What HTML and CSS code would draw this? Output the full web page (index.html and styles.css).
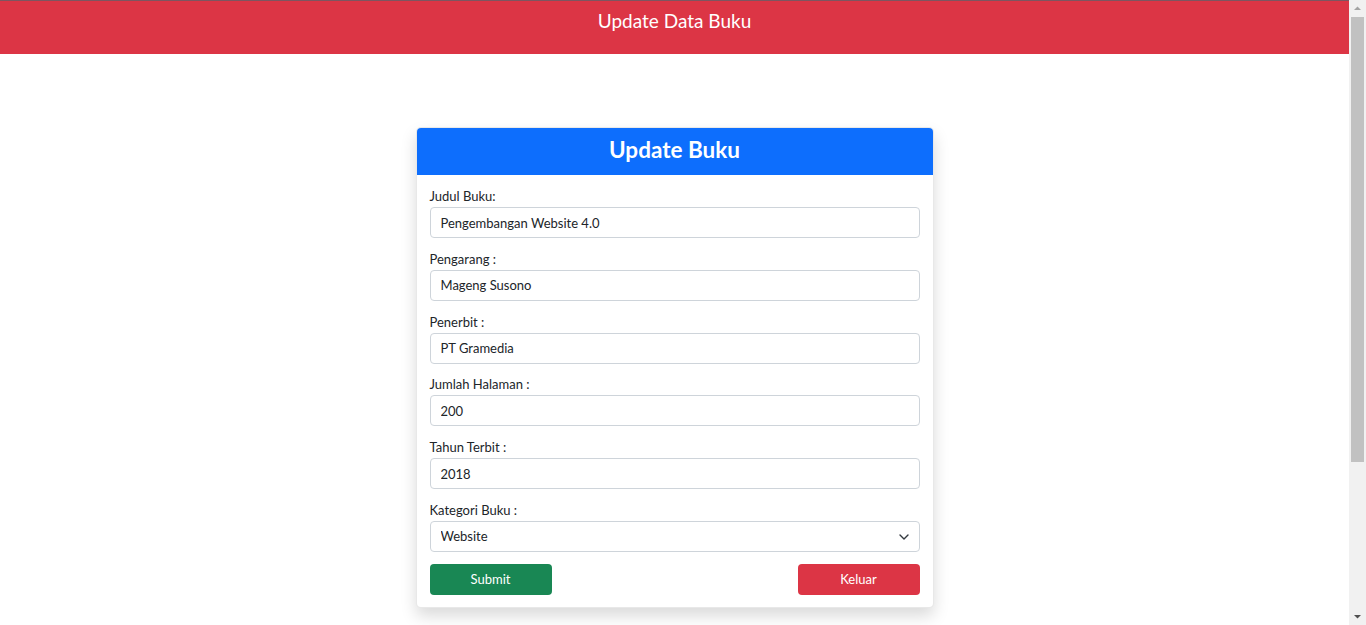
FILE: index.html
```html
<!DOCTYPE html>
<html lang="id">
<head>
<meta charset="utf-8">
<title>Update Data Buku</title>
<link rel="stylesheet" href="styles.css">
</head>
<body>
<div class="viewport">
  <header class="topbar">
    <h1 class="topbar-title">Update Data Buku</h1>
  </header>
  <main class="page">
    <section class="card">
      <div class="card-header">
        <h2 class="card-title">Update Buku</h2>
      </div>
      <form class="card-body">
        <div class="field">
          <label class="field-label" for="judul">Judul Buku:</label>
          <input class="field-input" id="judul" type="text" value="Pengembangan Website 4.0">
        </div>
        <div class="field">
          <label class="field-label" for="pengarang">Pengarang :</label>
          <input class="field-input" id="pengarang" type="text" value="Mageng Susono">
        </div>
        <div class="field">
          <label class="field-label" for="penerbit">Penerbit :</label>
          <input class="field-input" id="penerbit" type="text" value="PT Gramedia">
        </div>
        <div class="field">
          <label class="field-label" for="halaman">Jumlah Halaman :</label>
          <input class="field-input" id="halaman" type="text" value="200">
        </div>
        <div class="field">
          <label class="field-label" for="tahun">Tahun Terbit :</label>
          <input class="field-input" id="tahun" type="text" value="2018">
        </div>
        <div class="field">
          <label class="field-label" for="kategori">Kategori Buku :</label>
          <div class="select-wrap">
            <select class="field-input field-select" id="kategori">
              <option selected>Website</option>
            </select>
            <svg class="select-chevron" width="10" height="6" viewBox="0 0 10 6" aria-hidden="true"><path d="M1 1l4 4 4-4" fill="none" stroke="#343a40" stroke-width="1.4" stroke-linecap="round" stroke-linejoin="round"/></svg>
          </div>
        </div>
        <div class="actions">
          <button class="btn btn-green" type="button">Submit</button>
          <button class="btn btn-red" type="button">Keluar</button>
        </div>
      </form>
    </section>
  </main>
</div>
<div class="scrollbar" aria-hidden="true">
  <svg class="scroll-arrow" width="17" height="17" viewBox="0 0 17 17"><path d="M5 10h7L8.5 6.5z" fill="#a3a3a3"/></svg>
  <div class="scroll-track"><div class="scroll-thumb"></div></div>
  <svg class="scroll-arrow" width="17" height="17" viewBox="0 0 17 17"><path d="M5 7h7L8.5 10.5z" fill="#505050"/></svg>
</div>
</body>
</html>
```
FILE: styles.css
```css
html, body {
  margin: 0;
  padding: 0;
  height: 100%;
  overflow: hidden;
}
body {
  font-family: "Lato", "Open Sans", sans-serif;
  color: #212529;
  background: #ffffff;
  display: flex;
}
.viewport {
  flex: 1;
  min-width: 0;
}
.topbar {
  background: #dc3545;
  border-top: 1px solid #7d5560;
  height: 53px;
  display: flex;
  justify-content: center;
}
.topbar-title {
  margin: 0;
  padding-top: 7px;
  font-size: 19px;
  font-weight: 400;
  line-height: 26px;
  color: #ffffff;
}
.page {
  display: flex;
  justify-content: center;
  padding-top: 73px;
}
.card {
  width: 518px;
  box-sizing: border-box;
  border: 1px solid rgba(0, 0, 0, 0.09);
  border-radius: 5px;
  box-shadow: 0 8px 16px rgba(0, 0, 0, 0.15);
  background: #ffffff;
  overflow: hidden;
}
.card-header {
  background: #0d6efd;
  height: 47px;
  box-sizing: border-box;
  padding-bottom: 4px;
  display: flex;
  align-items: center;
  justify-content: center;
}
.card-title {
  margin: 0;
  font-size: 22.5px;
  font-weight: 700;
  color: #ffffff;
  line-height: 30px;
}
.card-body {
  padding: 11px 13px 12px;
  display: flex;
  flex-direction: column;
  gap: 10.8px;
}
.field {
  display: flex;
  flex-direction: column;
}
.field-label {
  font-size: 13px;
  line-height: 21px;
}
.field-input {
  box-sizing: border-box;
  width: 100%;
  height: 31px;
  padding: 0 10px;
  font-family: inherit;
  font-size: 13px;
  color: #212529;
  border: 1px solid #ced4da;
  border-radius: 4px;
  background: #ffffff;
  outline: none;
}
.select-wrap {
  position: relative;
}
.field-select {
  appearance: none;
  -webkit-appearance: none;
}
.select-chevron {
  position: absolute;
  right: 11px;
  top: 13px;
  pointer-events: none;
}
.actions {
  display: flex;
  justify-content: space-between;
  margin-top: 1.2px;
}
.btn {
  width: 122px;
  height: 31px;
  border: none;
  border-radius: 4px;
  color: #ffffff;
  font-family: inherit;
  font-size: 13px;
  cursor: pointer;
}
.btn-green {
  background: #198754;
}
.btn-red {
  background: #dc3545;
}
.scrollbar {
  width: 17px;
  flex: none;
  background: #f1f1f1;
  display: flex;
  flex-direction: column;
}
.scroll-arrow {
  display: block;
  flex: none;
}
.scroll-track {
  flex: 1;
  padding: 0 2px;
}
.scroll-thumb {
  height: 445px;
  background: #c1c1c1;
}
```
